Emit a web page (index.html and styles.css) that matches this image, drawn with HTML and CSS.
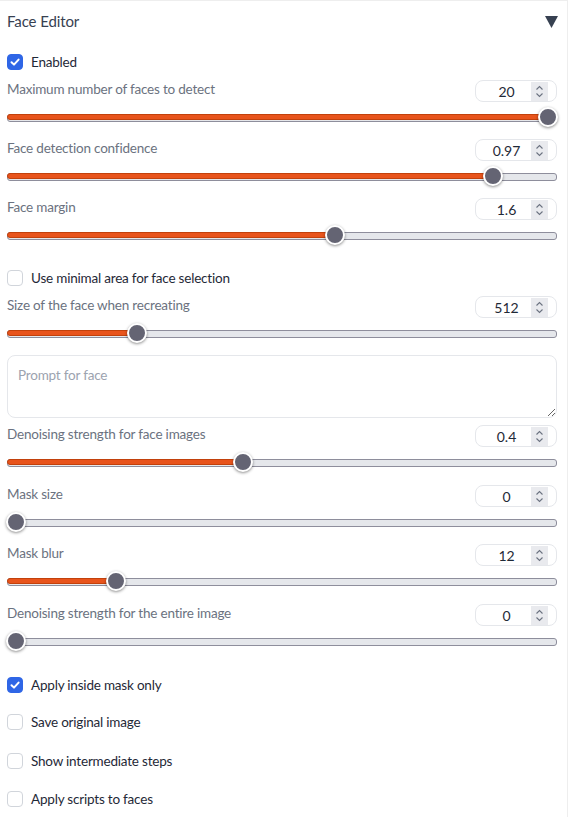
FILE: index.html
```html
<!DOCTYPE html>
<html>
<head>
<meta charset="utf-8">
<link rel="stylesheet" href="styles.css">
</head>
<body>
<div class="panel">
  <div class="header">
    <span class="title">Face Editor</span>
    <svg class="caret" width="13" height="13" viewBox="0 0 13 13"><polygon points="0,1 13,1 6.5,13" fill="#374151"/></svg>
  </div>

  <label class="check m-enabled"><span class="box on"><svg viewBox="0 0 16 16" width="16" height="16"><path d="M4.5 8.2 L7 10.6 L11.6 5.6" fill="none" stroke="#fff" stroke-width="2" stroke-linecap="round" stroke-linejoin="round"/></svg></span><span class="ctext">Enabled</span></label>

  <div class="slider-block m-b1">
    <div class="srow"><span class="slabel">Maximum number of faces to detect</span><span class="num"><span class="val">20</span><span class="spin"><svg viewBox="0 0 17 19" width="17" height="19"><path d="M5.5 7.5 L8.5 4.5 L11.5 7.5 M5.5 11.5 L8.5 14.5 L11.5 11.5" fill="none" stroke="#6b7280" stroke-width="1.1"/></svg></span></span></div>
    <div class="track" style="--f:1"><div class="fill"></div><div class="thumb"></div></div>
  </div>

  <div class="slider-block m-b">
    <div class="srow"><span class="slabel">Face detection confidence</span><span class="num"><span class="val">0.97</span><span class="spin"><svg viewBox="0 0 17 19" width="17" height="19"><path d="M5.5 7.5 L8.5 4.5 L11.5 7.5 M5.5 11.5 L8.5 14.5 L11.5 11.5" fill="none" stroke="#6b7280" stroke-width="1.1"/></svg></span></span></div>
    <div class="track" style="--f:0.897"><div class="fill"></div><div class="thumb"></div></div>
  </div>

  <div class="slider-block m-b">
    <div class="srow"><span class="slabel">Face margin</span><span class="num"><span class="val">1.6</span><span class="spin"><svg viewBox="0 0 17 19" width="17" height="19"><path d="M5.5 7.5 L8.5 4.5 L11.5 7.5 M5.5 11.5 L8.5 14.5 L11.5 11.5" fill="none" stroke="#6b7280" stroke-width="1.1"/></svg></span></span></div>
    <div class="track" style="--f:0.6"><div class="fill"></div><div class="thumb"></div></div>
  </div>

  <label class="check m-minimal"><span class="box"></span><span class="ctext">Use minimal area for face selection</span></label>

  <div class="slider-block m-b5">
    <div class="srow"><span class="slabel">Size of the face when recreating</span><span class="num"><span class="val">512</span><span class="spin"><svg viewBox="0 0 17 19" width="17" height="19"><path d="M5.5 7.5 L8.5 4.5 L11.5 7.5 M5.5 11.5 L8.5 14.5 L11.5 11.5" fill="none" stroke="#6b7280" stroke-width="1.1"/></svg></span></span></div>
    <div class="track" style="--f:0.2274"><div class="fill"></div><div class="thumb"></div></div>
  </div>

  <textarea class="prompt" placeholder="Prompt for face"></textarea>

  <div class="slider-block m-b7">
    <div class="srow"><span class="slabel">Denoising strength for face images</span><span class="num"><span class="val">0.4</span><span class="spin"><svg viewBox="0 0 17 19" width="17" height="19"><path d="M5.5 7.5 L8.5 4.5 L11.5 7.5 M5.5 11.5 L8.5 14.5 L11.5 11.5" fill="none" stroke="#6b7280" stroke-width="1.1"/></svg></span></span></div>
    <div class="track" style="--f:0.427"><div class="fill"></div><div class="thumb"></div></div>
  </div>

  <div class="slider-block m-b3">
    <div class="srow"><span class="slabel">Mask size</span><span class="num"><span class="val">0</span><span class="spin"><svg viewBox="0 0 17 19" width="17" height="19"><path d="M5.5 7.5 L8.5 4.5 L11.5 7.5 M5.5 11.5 L8.5 14.5 L11.5 11.5" fill="none" stroke="#6b7280" stroke-width="1.1"/></svg></span></span></div>
    <div class="track" style="--f:0"><div class="fill"></div><div class="thumb"></div></div>
  </div>

  <div class="slider-block m-b">
    <div class="srow"><span class="slabel">Mask blur</span><span class="num"><span class="val">12</span><span class="spin"><svg viewBox="0 0 17 19" width="17" height="19"><path d="M5.5 7.5 L8.5 4.5 L11.5 7.5 M5.5 11.5 L8.5 14.5 L11.5 11.5" fill="none" stroke="#6b7280" stroke-width="1.1"/></svg></span></span></div>
    <div class="track" style="--f:0.1875"><div class="fill"></div><div class="thumb"></div></div>
  </div>

  <div class="slider-block m-b3">
    <div class="srow"><span class="slabel">Denoising strength for the entire image</span><span class="num"><span class="val">0</span><span class="spin"><svg viewBox="0 0 17 19" width="17" height="19"><path d="M5.5 7.5 L8.5 4.5 L11.5 7.5 M5.5 11.5 L8.5 14.5 L11.5 11.5" fill="none" stroke="#6b7280" stroke-width="1.1"/></svg></span></span></div>
    <div class="track" style="--f:0"><div class="fill"></div><div class="thumb"></div></div>
  </div>

  <label class="check m-c1"><span class="box on"><svg viewBox="0 0 16 16" width="16" height="16"><path d="M4.5 8.2 L7 10.6 L11.6 5.6" fill="none" stroke="#fff" stroke-width="2" stroke-linecap="round" stroke-linejoin="round"/></svg></span><span class="ctext">Apply inside mask only</span></label>
  <label class="check m-c2"><span class="box"></span><span class="ctext">Save original image</span></label>
  <label class="check m-c3"><span class="box"></span><span class="ctext">Show intermediate steps</span></label>
  <label class="check m-c4"><span class="box"></span><span class="ctext">Apply scripts to faces</span></label>
</div>
</body>
</html>
```

FILE: styles.css
```css
* { box-sizing: border-box; }
html, body { margin: 0; padding: 0; background: #fff; }
body {
  font-family: "Lato", "Noto Sans", "Liberation Sans", sans-serif;
  width: 568px;
  height: 817px;
  overflow: hidden;
}
.panel {
  display: flex;
  flex-direction: column;
  padding: 0 10px 0 7px;
  border-top: 1px solid #eeeeee;
  border-right: 1px solid #eeeeee;
  height: 817px;
}
.header {
  height: 40px;
  display: flex;
  align-items: center;
  justify-content: space-between;
}
.title {
  font-size: 15px;
  letter-spacing: -0.1px;
  color: #374151;
}
.caret { margin-right: -1px; margin-top: 1px; }

.check {
  display: flex;
  align-items: center;
  gap: 8px;
  height: 16px;
}
.box {
  width: 16px;
  height: 16px;
  border-radius: 4px;
  border: 1px solid #d1d5db;
  background: #fff;
  flex: none;
  display: flex;
}
.box.on {
  background: #2f66e6;
  border-color: #2f66e6;
}
.box.on svg { margin: -1px; }
.ctext {
  font-size: 13.5px;
  letter-spacing: -0.2px;
  color: #1f2937;
}

.slider-block {
  display: flex;
  flex-direction: column;
  gap: 5px;
}
.srow {
  display: flex;
  justify-content: space-between;
  align-items: flex-start;
  height: 22px;
}
.slabel {
  font-size: 13.5px;
  letter-spacing: -0.2px;
  color: #6b7280;
  line-height: 18px;
}
.num {
  width: 82px;
  height: 22px;
  border: 1px solid #e5e7eb;
  border-radius: 8px;
  display: flex;
  align-items: center;
  padding: 0 8px 0 6px;
}
.val {
  flex: 1;
  text-align: center;
  font-size: 14px;
  color: #1f2937;
}
.spin {
  width: 17px;
  height: 19px;
  background: #e9eaee;
  display: flex;
  flex: none;
}

.track {
  position: relative;
  height: 20px;
}
.track::before {
  content: "";
  position: absolute;
  left: 0;
  right: 0;
  top: 7px;
  height: 6px;
  border: 1px solid #8e8e9c;
  background: #e5e7eb;
  border-radius: 3px;
}
.fill {
  position: absolute;
  left: 0;
  top: 7px;
  height: 6px;
  width: calc(9px + var(--f) * (100% - 18px));
  background: #e8541c;
  border: 1px solid #c2410c;
  border-radius: 3px;
}
.thumb {
  position: absolute;
  top: 0;
  left: calc(var(--f) * (100% - 18px) - 1px);
  width: 20px;
  height: 20px;
  border-radius: 50%;
  background: #646473;
  border: 2px solid #fff;
  box-shadow: 0 1px 3px rgba(0, 0, 0, 0.45);
}

.prompt {
  display: block;
  width: 100%;
  height: 63px;
  border: 1px solid #e5e7eb;
  border-radius: 8px;
  padding: 11px 10px;
  font-family: inherit;
  font-size: 13.5px;
  letter-spacing: -0.2px;
  color: #1f2937;
  resize: vertical;
  outline: none;
}
.prompt::placeholder { color: #9ca3af; }

.m-enabled { margin-top: 13px; }
.m-b1 { margin-top: 10px; }
.m-b { margin-top: 12px; }
.m-b3 { margin-top: 13px; }
.m-minimal { margin-top: 25px; }
.m-b5 { margin-top: 10px; }
.prompt { margin-top: 12px; }
.m-b7 { margin-top: 7px; }
.m-c1 { margin-top: 26px; }
.m-c2 { margin-top: 21px; }
.m-c3 { margin-top: 23px; }
.m-c4 { margin-top: 22px; }
```
